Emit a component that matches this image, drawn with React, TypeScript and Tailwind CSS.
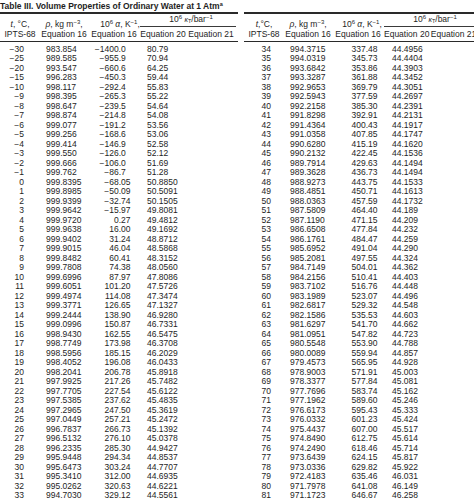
import React from "react";

type Row = [string, string, string, string];

const leftRows: Row[] = [
  ["-30", "983.854", "-1400.0", "80.79"],
  ["-25", "989.585", "-955.9", "70.94"],
  ["-20", "993.547", "-660.6", "64.25"],
  ["-15", "996.283", "-450.3", "59.44"],
  ["-10", "998.117", "-292.4", "55.83"],
  ["-9", "998.395", "-265.3", "55.22"],
  ["-8", "998.647", "-239.5", "54.64"],
  ["-7", "998.874", "-214.8", "54.08"],
  ["-6", "999.077", "-191.2", "53.56"],
  ["-5", "999.256", "-168.6", "53.06"],
  ["-4", "999.414", "-146.9", "52.58"],
  ["-3", "999.550", "-126.0", "52.12"],
  ["-2", "999.666", "-106.0", "51.69"],
  ["-1", "999.762", "-86.7", "51.28"],
  ["0", "999.8395", "-68.05", "50.8850"],
  ["1", "999.8985", "-50.09", "50.5091"],
  ["2", "999.9399", "-32.74", "50.1505"],
  ["3", "999.9642", "-15.97", "49.8081"],
  ["4", "999.9720", "0.27", "49.4812"],
  ["5", "999.9638", "16.00", "49.1692"],
  ["6", "999.9402", "31.24", "48.8712"],
  ["7", "999.9015", "46.04", "48.5868"],
  ["8", "999.8482", "60.41", "48.3152"],
  ["9", "999.7808", "74.38", "48.0560"],
  ["10", "999.6996", "87.97", "47.8086"],
  ["11", "999.6051", "101.20", "47.5726"],
  ["12", "999.4974", "114.08", "47.3474"],
  ["13", "999.3771", "126.65", "47.1327"],
  ["14", "999.2444", "138.90", "46.9280"],
  ["15", "999.0996", "150.87", "46.7331"],
  ["16", "998.9430", "162.55", "46.5475"],
  ["17", "998.7749", "173.98", "46.3708"],
  ["18", "998.5956", "185.15", "46.2029"],
  ["19", "998.4052", "196.08", "46.0433"],
  ["20", "998.2041", "206.78", "45.8918"],
  ["21", "997.9925", "217.26", "45.7482"],
  ["22", "997.7705", "227.54", "45.6122"],
  ["23", "997.5385", "237.62", "45.4835"],
  ["24", "997.2965", "247.50", "45.3619"],
  ["25", "997.0449", "257.21", "45.2472"],
  ["26", "996.7837", "266.73", "45.1392"],
  ["27", "996.5132", "276.10", "45.0378"],
  ["28", "996.2335", "285.30", "44.9427"],
  ["29", "995.9448", "294.34", "44.8537"],
  ["30", "995.6473", "303.24", "44.7707"],
  ["31", "995.3410", "312.00", "44.6935"],
  ["32", "995.0262", "320.63", "44.6221"],
  ["33", "994.7030", "329.12", "44.5561"],
];

const rightRows: Row[] = [
  ["34", "994.3715", "337.48", "44.4956"],
  ["35", "994.0319", "345.73", "44.4404"],
  ["36", "993.6842", "353.86", "44.3903"],
  ["37", "993.3287", "361.88", "44.3452"],
  ["38", "992.9653", "369.79", "44.3051"],
  ["39", "992.5943", "377.59", "44.2697"],
  ["40", "992.2158", "385.30", "44.2391"],
  ["41", "991.8298", "392.91", "44.2131"],
  ["42", "991.4364", "400.43", "44.1917"],
  ["43", "991.0358", "407.85", "44.1747"],
  ["44", "990.6280", "415.19", "44.1620"],
  ["45", "990.2132", "422.45", "44.1536"],
  ["46", "989.7914", "429.63", "44.1494"],
  ["47", "989.3628", "436.73", "44.1494"],
  ["48", "988.9273", "443.75", "44.1533"],
  ["49", "988.4851", "450.71", "44.1613"],
  ["50", "988.0363", "457.59", "44.1732"],
  ["51", "987.5809", "464.40", "44.189"],
  ["52", "987.1190", "471.15", "44.209"],
  ["53", "986.6508", "477.84", "44.232"],
  ["54", "986.1761", "484.47", "44.259"],
  ["55", "985.6952", "491.04", "44.290"],
  ["56", "985.2081", "497.55", "44.324"],
  ["57", "984.7149", "504.01", "44.362"],
  ["58", "984.2156", "510.41", "44.403"],
  ["59", "983.7102", "516.76", "44.448"],
  ["60", "983.1989", "523.07", "44.496"],
  ["61", "982.6817", "529.32", "44.548"],
  ["62", "982.1586", "535.53", "44.603"],
  ["63", "981.6297", "541.70", "44.662"],
  ["64", "981.0951", "547.82", "44.723"],
  ["65", "980.5548", "553.90", "44.788"],
  ["66", "980.0089", "559.94", "44.857"],
  ["67", "979.4573", "565.95", "44.928"],
  ["68", "978.9003", "571.91", "45.003"],
  ["69", "978.3377", "577.84", "45.081"],
  ["70", "977.7696", "583.74", "45.162"],
  ["71", "977.1962", "589.60", "45.246"],
  ["72", "976.6173", "595.43", "45.333"],
  ["73", "976.0332", "601.23", "45.424"],
  ["74", "975.4437", "607.00", "45.517"],
  ["75", "974.8490", "612.75", "45.614"],
  ["76", "974.2490", "618.46", "45.714"],
  ["77", "973.6439", "624.15", "45.817"],
  ["78", "973.0336", "629.82", "45.922"],
  ["79", "972.4183", "635.46", "46.031"],
  ["80", "971.7978", "641.08", "46.149"],
  ["81", "971.1723", "646.67", "46.258"],
];

// column offsets differ a little between the two halves of the scan
const variants = {
  left: {
    t: "w-[24px]",
    rho: "ml-[22px] w-[44px]",
    alphaInt: "w-[31px]",
    alphaFrac: "w-[26px]",
    alphaHead: "pl-[12px]",
    eq20: "w-[46px]",
    eq21: "w-[50px]",
    tHead: "t, °C,",
  },
  right: {
    t: "w-[27px]",
    rho: "ml-[19px] w-[44px]",
    alphaInt: "w-[34px]",
    alphaFrac: "w-[24px]",
    alphaHead: "pl-[8px]",
    eq20: "w-[45px]",
    eq21: "w-[49px]",
    tHead: "t,°C,",
  },
};

const minus = (s: string) => s.replace("-", "\u2212");

function Table({ rows, side }: { rows: Row[]; side: "left" | "right" }) {
  const v = variants[side];
  return (
    <div className="w-[238px] shrink-0">
      {/* Header */}
      <div className="flex h-[30px] border-t-2 border-b-[1.5px] border-[#2a2a2a] font-['Liberation_Sans',Arial,sans-serif] text-[8.5px] leading-[9px] whitespace-nowrap">
        <div className="w-[40px] flex flex-col items-center justify-end gap-[1px] pb-[2px]">
          <div className="h-[9px]">
            <i>t</i>
            {v.tHead.slice(1)}
          </div>
          <div className="h-[9px]">IPTS-68</div>
        </div>
        <div className="w-[48px] flex flex-col items-center justify-end gap-[1px] pb-[2px]">
          <div className="h-[9px]">
            <i>ρ</i>, kg m<sup className="text-[6px]">−3</sup>,
          </div>
          <div className="h-[9px]">Equation 16</div>
        </div>
        <div className="w-[52px] flex flex-col items-center justify-end gap-[1px] pb-[2px]">
          <div className={`h-[9px] ${v.alphaHead}`}>
            10<sup className="text-[6px]">6</sup> <i>α</i>, K<sup className="text-[6px]">−1</sup>,
          </div>
          <div className="h-[9px]">Equation 16</div>
        </div>
        <div className="w-[96px] flex flex-col justify-end pb-[2px]">
          <div className="h-[9px] text-center pl-[6px]">
            10<sup className="text-[6px]">6</sup> <i className="text-[7px]">κ</i>
            <sub className="text-[5.5px]">T</sub>/bar<sup className="text-[6px]">−1</sup>
          </div>
          <div className="mt-[2.5px] h-px bg-[#3a3a3a]" />
          <div className="mt-[3px] flex">
            <div className={`${v.eq20} h-[9px] text-center`}>Equation 20</div>
            <div className={`${v.eq21} h-[9px] text-center`}>Equation 21</div>
          </div>
        </div>
      </div>

      {/* Rows */}
      <div className="pt-[2.75px] font-['Liberation_Sans_Narrow','Liberation_Sans',Arial,sans-serif] text-[8.5px] text-[#1e1e1e]">
        {rows.map((r) => {
          const a = minus(r[2]);
          const dot = a.indexOf(".");
          return (
            <div key={r[0]} className="flex h-[9.5px] leading-[9.5px] whitespace-nowrap">
              <div className={`${v.t} text-right`}>{minus(r[0])}</div>
              <div className={v.rho}>{r[1]}</div>
              <div className={`${v.alphaInt} text-right`}>{a.slice(0, dot + 1)}</div>
              <div className={v.alphaFrac}>{a.slice(dot + 1)}</div>
              <div>{r[3]}</div>
            </div>
          );
        })}
      </div>
    </div>
  );
}

export default function App() {
  return (
    <div className="w-[474px] h-[500px] overflow-hidden bg-white text-[#1e1e1e]">
      <div className="h-[12px] leading-[12px] font-['Liberation_Sans_Narrow','Liberation_Sans',Arial,sans-serif] font-bold text-[8.5px] whitespace-nowrap">
        Table III. Volume Properties of Ordinary Water at 1 Atm<sup className="text-[5.5px]">a</sup>
      </div>
      <div className="flex gap-[6px]">
        <Table rows={leftRows} side="left" />
        <Table rows={rightRows} side="right" />
      </div>
    </div>
  );
}
